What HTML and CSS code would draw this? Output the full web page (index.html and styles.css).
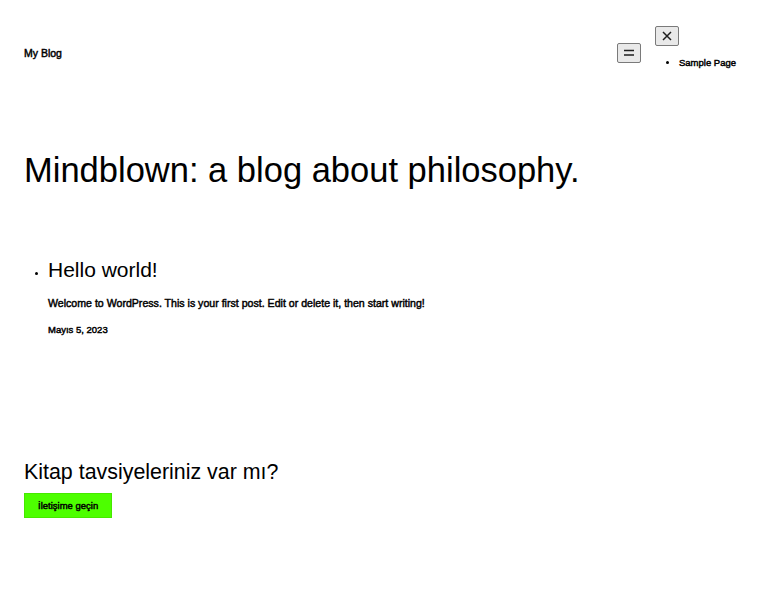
FILE: index.html
```html
<!DOCTYPE html>
<html lang="tr">
<head>
<meta charset="utf-8">
<title>My Blog</title>
<link rel="stylesheet" href="styles.css">
</head>
<body>
<header class="site-header">
  <p class="site-title">My Blog</p>
  <nav class="site-nav">
    <button class="nav-btn nav-open" aria-label="Menüyü aç">
      <svg width="12" height="8" viewBox="0 0 12 8"><path d="M1 1.5h10M1 6h10" stroke="#1e1e1e" stroke-width="1.7" fill="none"/></svg>
    </button>
    <div class="nav-panel">
      <button class="nav-btn nav-close" aria-label="Menüyü kapat">
        <svg width="10" height="10" viewBox="0 0 10 10"><path d="M1 1l8 8M9 1l-8 8" stroke="#1e1e1e" stroke-width="1.5" fill="none"/></svg>
      </button>
      <ul class="nav-list">
        <li>Sample Page</li>
      </ul>
    </div>
  </nav>
</header>
<main class="site-main">
  <h1 class="page-title">Mindblown: a blog about philosophy.</h1>
  <ul class="post-list">
    <li class="post">
      <h2 class="post-title">Hello world!</h2>
      <p class="post-excerpt">Welcome to WordPress. This is your first post. Edit or delete it, then start writing!</p>
      <p class="post-date">Mayıs 5, 2023</p>
    </li>
  </ul>
  <section class="cta">
    <h2 class="cta-title">Kitap tavsiyeleriniz var mı?</h2>
    <a class="cta-btn" href="#">İletişime geçin</a>
  </section>
</main>
</body>
</html>
```
FILE: styles.css
```css
* { box-sizing: border-box; }
html, body { margin: 0; padding: 0; background: #fff; }
body {
  font-family: "Liberation Sans", Arial, sans-serif;
  color: #000;
}
.site-header {
  display: flex;
  justify-content: space-between;
  align-items: flex-start;
  padding: 26px 24px 0;
}
.site-title {
  margin: 20px 0 0;
  font-size: 10.5px;
  line-height: 14px;
  -webkit-text-stroke: 0.45px #000;
}
.site-nav {
  display: flex;
  align-items: flex-start;
}
.nav-btn {
  display: flex;
  align-items: center;
  justify-content: center;
  width: 24px;
  height: 20px;
  padding: 0;
  background: #e9e9e9;
  border: 1px solid #7a7a7a;
  border-radius: 2px;
}
.nav-open { margin-top: 17px; }
.nav-panel {
  display: flex;
  flex-direction: column;
  margin-left: 14px;
}
.nav-list {
  margin: 10px 0 0;
  padding-left: 24px;
  font-size: 9.5px;
  line-height: 14px;
  -webkit-text-stroke: 0.45px #000;
}
.site-main { padding: 0 24px; }
.page-title {
  margin: 78.5px 0 0;
  font-size: 34.5px;
  font-weight: normal;
  line-height: 42px;
}
.post-list {
  margin: 66px 0 0;
  padding-left: 24px;
  font-size: 10px;
}
.post-title {
  margin: 0;
  font-size: 21px;
  font-weight: normal;
  line-height: 25px;
}
.post-excerpt {
  margin: 14px 0 0;
  font-size: 10.6px;
  line-height: 14px;
  -webkit-text-stroke: 0.45px #000;
}
.post-date {
  margin: 13.5px 0 0;
  font-size: 9.5px;
  line-height: 14px;
  -webkit-text-stroke: 0.45px #000;
}
.cta { margin-top: 122px; }
.cta-title {
  margin: 0;
  font-size: 21.4px;
  font-weight: normal;
  line-height: 26px;
}
.cta-btn {
  display: inline-block;
  margin-top: 8px;
  padding: 6px 13px;
  background: #4dff00;
  border: 1px solid #46e800;
  color: #000;
  text-decoration: none;
  font-size: 9.5px;
  line-height: 11px;
  -webkit-text-stroke: 0.45px #000;
}
```
